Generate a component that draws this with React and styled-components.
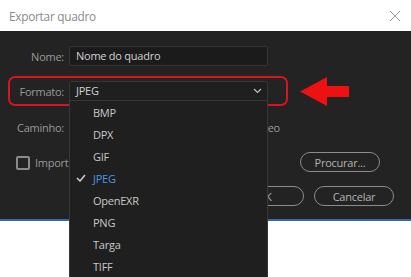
import React from "react";
import styled, { createGlobalStyle } from "styled-components";

const GlobalStyle = createGlobalStyle`
  html, body { margin: 0; padding: 0; background: #ffffff; }
  body { font-family: "Open Sans", "Noto Sans", sans-serif; letter-spacing: -0.25px; }
  * { box-sizing: border-box; }
`;

const Dialog = styled.div`
  position: relative;
  width: 411px;
  height: 277px;
  overflow: hidden;
`;

const TitleBar = styled.div`
  height: 31px;
  background: #ffffff;
  display: flex;
  align-items: center;
  justify-content: space-between;
  padding: 0 10px 0 9px;
`;

const Title = styled.div`
  font-size: 11.8px;
  color: #8a8a8a;
`;

const CloseIcon = styled.svg`
  width: 12px;
  height: 12px;
  display: block;
`;

const Panel = styled.div`
  background: #232323;
  border-bottom: 2px solid #2f6ba6;
  height: 190px;
  padding-top: 15px;
  display: flex;
  flex-direction: column;
`;

const FieldRow = styled.div`
  position: relative;
  display: grid;
  grid-template-columns: 64px 199px;
  column-gap: 5px;
  align-items: center;
  height: 20px;
  margin-bottom: ${(p) => p.$mb || 0}px;
`;

const Label = styled.div`
  text-align: right;
  font-size: 11px;
  color: #9a9a9a;
  white-space: nowrap;
`;

const TextInput = styled.div`
  height: 20px;
  background: #1b1b1b;
  border: 1px solid #363636;
  border-radius: 2px;
  color: #d2d2d2;
  font-size: 11px;
  line-height: 18px;
  padding-left: 6px;
`;

const Select = styled(TextInput)`
  display: flex;
  align-items: center;
  justify-content: space-between;
  padding-right: 5px;
  background: #1f1f1f;
`;

const Highlight = styled.div`
  position: absolute;
  left: 8px;
  top: -5px;
  width: 280px;
  height: 30px;
  border: 2px solid #d8141e;
  border-radius: 7px;
  pointer-events: none;
`;

const PathText = styled.div`
  width: 211px;
  overflow: hidden;
  white-space: nowrap;
  display: flex;
  justify-content: flex-end;
  font-size: 11px;
  color: #9a9a9a;
`;

const CheckRow = styled.div`
  display: flex;
  align-items: center;
  justify-content: space-between;
  height: 20px;
  padding: 0 31px 0 16px;
  margin-bottom: 14px;
`;

const CheckLabel = styled.label`
  display: flex;
  align-items: center;
  gap: 5px;
  white-space: nowrap;
  font-size: 11px;
  color: #9a9a9a;
`;

const Box = styled.span`
  flex: none;
  width: 14px;
  height: 14px;
  border: 2px solid #8a8a8a;
  border-radius: 2px;
  margin-top: 1px;
`;

const PillButton = styled.div`
  width: ${(p) => p.$w || 80}px;
  height: 20px;
  border: 1px solid #8c8c8c;
  border-radius: 10px;
  display: flex;
  align-items: center;
  justify-content: center;
  font-size: 11px;
  color: #b4b4b4;
`;

const ButtonRow = styled.div`
  display: flex;
  justify-content: flex-end;
  gap: 10px;
  padding-right: 17px;
`;

const Arrow = styled.svg`
  position: absolute;
  left: 300px;
  top: 77px;
  width: 49px;
  height: 29px;
`;

const Menu = styled.div`
  position: absolute;
  left: 69px;
  top: 100px;
  width: 199px;
  background: #1f1f1f;
  border: 1px solid #383838;
  border-bottom: none;
`;

const MenuItem = styled.div`
  height: 22px;
  display: flex;
  align-items: center;
  padding-left: 23px;
  position: relative;
  font-size: 11px;
  color: ${(p) => (p.$selected ? "#4f93e2" : "#c8c8c8")};
`;

const Check = styled.svg`
  position: absolute;
  left: 6px;
  top: 7px;
  width: 10px;
  height: 8px;
`;

const formats = ["BMP", "DPX", "GIF", "JPEG", "OpenEXR", "PNG", "Targa", "TIFF"];

export default function App() {
  return (
    <>
      <GlobalStyle />
      <Dialog>
        <TitleBar>
          <Title>Exportar quadro</Title>
          <CloseIcon viewBox="0 0 12 12">
            <path d="M1 1 L11 11 M11 1 L1 11" stroke="#9a9a9a" strokeWidth="1" fill="none" />
          </CloseIcon>
        </TitleBar>
        <Panel>
          <FieldRow $mb={15}>
            <Label>Nome:</Label>
            <TextInput>Nome do quadro</TextInput>
          </FieldRow>
          <FieldRow $mb={16}>
            <Highlight />
            <Label>Formato:</Label>
            <Select>
              <span>JPEG</span>
              <svg width="9" height="6" viewBox="0 0 9 6">
                <path d="M1 1 L4.5 4.5 L8 1" stroke="#bdbdbd" strokeWidth="1.2" fill="none" />
              </svg>
            </Select>
          </FieldRow>
          <FieldRow $mb={15}>
            <Label>Caminho:</Label>
            <PathText>
              <span>C:\Users\Usuário\Documents\Vídeo</span>
            </PathText>
          </FieldRow>
          <CheckRow>
            <CheckLabel>
              <Box />
              Importar para o projeto
            </CheckLabel>
            <PillButton>Procurar...</PillButton>
          </CheckRow>
          <ButtonRow>
            <PillButton>OK</PillButton>
            <PillButton>Cancelar</PillButton>
          </ButtonRow>
        </Panel>
        <Arrow viewBox="0 0 49 29">
          <path d="M0 14.5 L27 0 L27 9 L49 9 L49 20 L27 20 L27 29 Z" fill="#ee1111" />
        </Arrow>
        <Menu>
          {formats.map((f) => (
            <MenuItem key={f} $selected={f === "JPEG"}>
              {f === "JPEG" && (
                <Check viewBox="0 0 10 8">
                  <path d="M1 4 L4 7 L9 1" stroke="#cfcfcf" strokeWidth="1.5" fill="none" />
                </Check>
              )}
              {f}
            </MenuItem>
          ))}
        </Menu>
      </Dialog>
    </>
  );
}
